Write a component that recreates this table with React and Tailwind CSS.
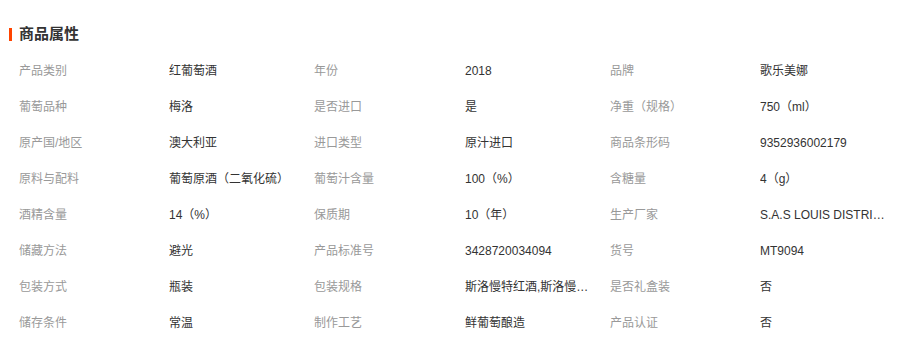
import React from "react";

const rows = [
  ["产品类别", "红葡萄酒", "年份", "2018", "品牌", "歌乐美娜"],
  ["葡萄品种", "梅洛", "是否进口", "是", "净重（规格）", "750（ml）"],
  ["原产国/地区", "澳大利亚", "进口类型", "原汁进口", "商品条形码", "9352936002179"],
  ["原料与配料", "葡萄原酒（二氧化硫）", "葡萄汁含量", "100（%）", "含糖量", "4（g）"],
  ["酒精含量", "14（%）", "保质期", "10（年）", "生产厂家", "S.A.S LOUIS DISTRIBUTION"],
  ["储藏方法", "避光", "产品标准号", "3428720034094", "货号", "MT9094"],
  ["包装方式", "瓶装", "包装规格", "斯洛慢特红酒,斯洛慢特干红", "是否礼盒装", "否"],
  ["储存条件", "常温", "制作工艺", "鲜葡萄酿造", "产品认证", "否"],
];

export default function App() {
  return (
    <div
      className="w-[923px] h-[344px] bg-white overflow-hidden"
      style={{ fontFamily: '"Liberation Sans", "Noto Sans CJK SC", sans-serif' }}
    >
      {/* title */}
      <div className="flex items-center h-[13px] mt-[28px] pl-[9px]">
        <span className="w-[3px] h-[13px] bg-[#ff4400]" />
        <span className="ml-[7px] text-[15px] font-bold text-[#333]">商品属性</span>
      </div>

      <div className="mt-[12px] pl-[19px]">
        {rows.map((row, i) => (
          <div
            key={i}
            className="grid grid-cols-[150px_145px_151px_145px_150px_1fr] h-[36px] items-center text-[12px]"
          >
            {row.map((cell, j) => (
              <div
                key={j}
                className={
                  j % 2 === 0
                    ? "text-[#999] whitespace-nowrap"
                    : "text-[#333] whitespace-nowrap overflow-hidden text-ellipsis max-w-[130px]"
                }
              >
                {cell}
              </div>
            ))}
          </div>
        ))}
      </div>
    </div>
  );
}
